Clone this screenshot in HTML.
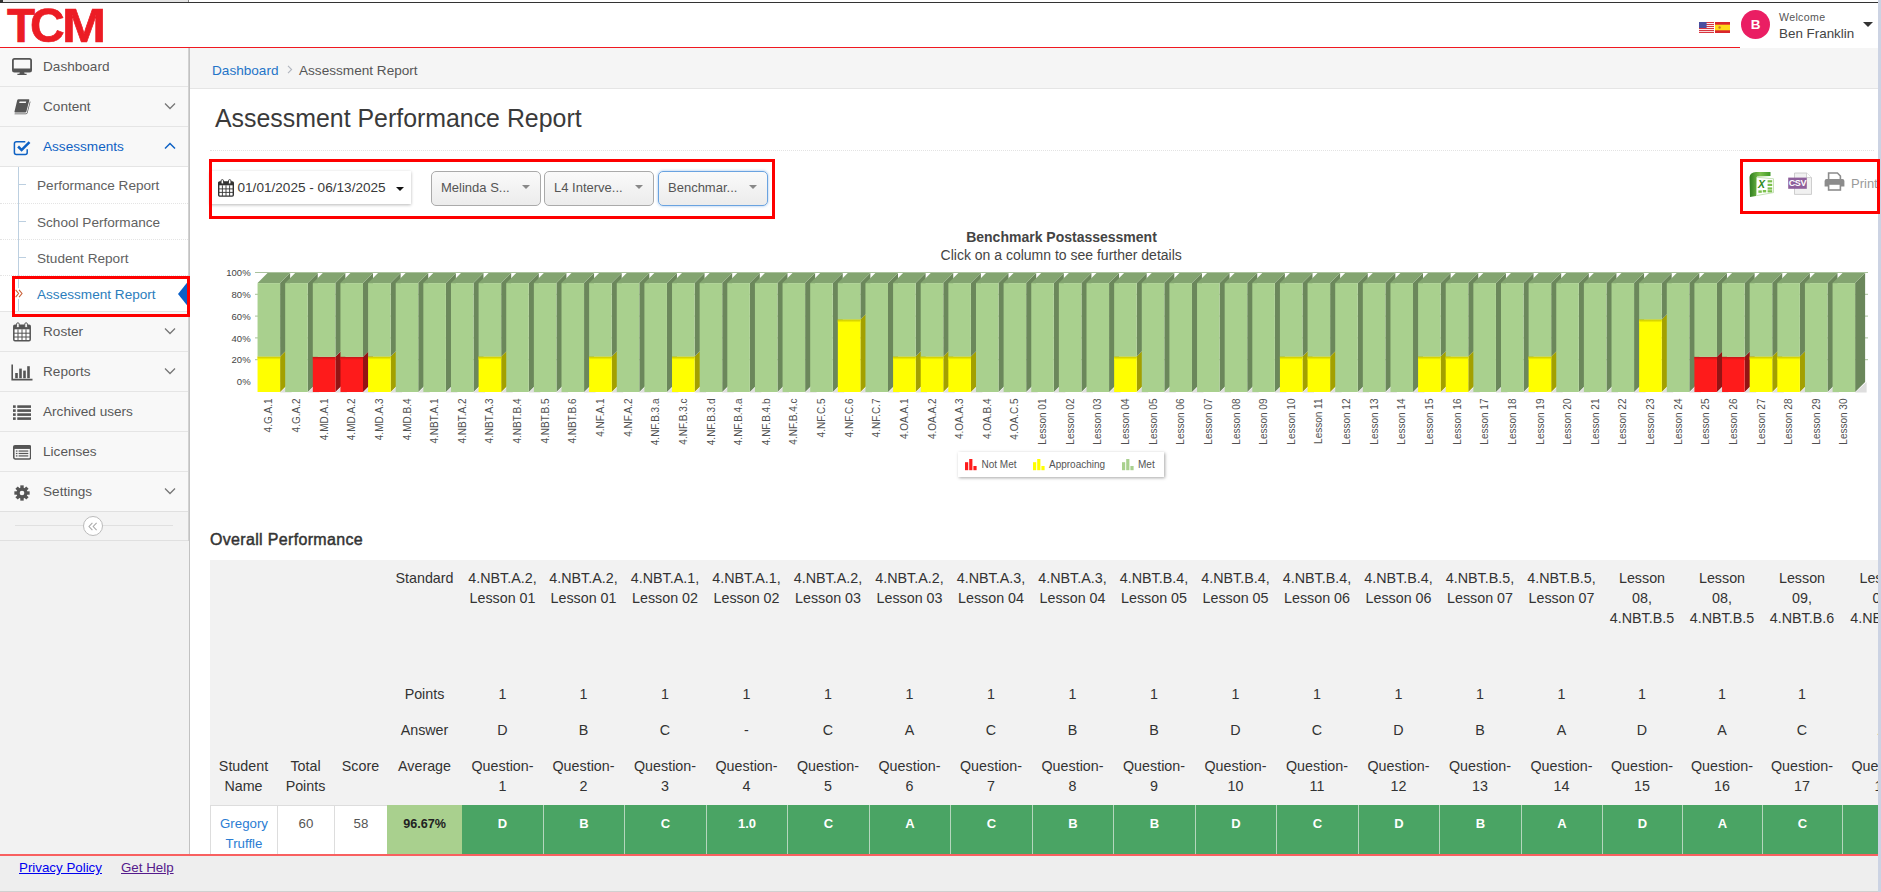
<!DOCTYPE html>
<html lang="en">
<head>
<meta charset="utf-8">
<title>Assessment Performance Report</title>
<style>
*{box-sizing:border-box;}
html,body{margin:0;padding:0;}
body{width:1881px;height:892px;overflow:hidden;position:relative;background:#fff;font-family:"Liberation Sans","DejaVu Sans",sans-serif;font-size:13.6px;color:#393939;}
a{text-decoration:none;}
.abs{position:absolute;}
/* top strip */
#topstrip{left:0;top:0;width:1878px;height:3px;background:#fff;border-bottom:1px solid #333;}
#rstrip{z-index:6;left:1878px;top:0;width:3px;height:892px;background:#ccd3e3;}
/* header */
#header{z-index:5;left:0;top:3px;width:1878px;height:45px;background:#fff;border-bottom:1px solid #f01820;}
#logo{left:0;top:0px;width:120px;height:45px;font-family:"Liberation Sans",sans-serif;font-weight:700;font-size:49.0px;line-height:45px;color:#ec1c24;-webkit-text-stroke:0.7px #ec1c24;}
#logo span{position:absolute;top:0;transform-origin:0 0;}
/* sidebar */
#sidebar{left:0;top:47px;width:190px;height:807px;background:#f2f2f2;border-right:1px solid #c2c2c2;}
.nav-item{position:absolute;left:0;width:188px;height:40px;background:#f8f8f8;border-bottom:1px solid #e5e5e5;color:#585858;}
.nav-item .txt{position:absolute;left:43px;top:0;line-height:39px;white-space:nowrap;}
.nav-item svg.ic{position:absolute;}
.nav-item svg.arr{position:absolute;left:164px;top:15px;}
.sub{position:absolute;left:0;width:188px;height:36px;background:#fff;border-top:1px dotted #e4e4e4;color:#616161;}
.sub .txt{position:absolute;left:37px;top:1px;line-height:36px;white-space:nowrap;}
.sub .tick{position:absolute;left:19px;top:17px;width:7px;height:1px;background:#bccfe0;}
/* breadcrumbs */
#crumbs{left:190px;top:47px;width:1688px;height:42px;background:#f5f5f5;border-bottom:1px solid #e5e5e5;}
#crumbs span{position:absolute;top:1px;line-height:46px;white-space:nowrap;}
/* footer */
#footer{left:0;top:854px;width:1878px;height:38px;background:#eee;border-top:2px solid #f86060;border-bottom:1px solid #d0d0d0;}
#footer a{position:absolute;top:4px;font-size:13.33px;line-height:16px;text-decoration:underline;white-space:nowrap;}

#title{left:25px;top:12px;font-size:24.9px;line-height:34px;color:#3a3a3a;white-space:nowrap;}
#dots{left:20px;top:61px;width:1664px;height:0;border-top:1px dotted #e3e3e3;}
.redbox{position:absolute;border:3px solid #fe0000;}
#date{left:20px;top:82px;width:201px;height:33px;background:#fff;box-shadow:0 1px 3px rgba(0,0,0,.28);}
#date .t{position:absolute;left:27.5px;top:0;line-height:33px;font-size:13.6px;color:#393939;white-space:nowrap;}
.sel{position:absolute;top:82px;width:110px;height:35px;border:1px solid #aaa;border-radius:5px;background:linear-gradient(#fafafa 0%,#f4f4f4 40%,#ececec 100%);}
.sel .t{position:absolute;left:9px;top:0;line-height:32px;font-size:13px;color:#555;white-space:nowrap;}
.sel svg{position:absolute;left:90px;top:13px;}
.th{position:absolute;text-align:center;font-size:14.3px;line-height:20px;color:#333;white-space:nowrap;}
.td{position:absolute;top:245px;height:60px;text-align:center;font-size:13.3px;line-height:20px;padding-top:8px;white-space:nowrap;}
.g{background:#4aa464;color:#fff;font-weight:700;font-size:13px;border-left:1px solid #b5d6bd;padding-top:9px;}
</style>
</head>
<body>
<div id="topstrip" class="abs"><div class="abs" style="left:0;top:0;width:3px;height:3px;background:#333;"></div><div class="abs" style="left:3px;top:0;width:186px;height:2px;background:#e4e4e4;"></div><div class="abs" style="left:188px;top:0;width:1px;height:2px;background:#888;"></div></div>
<div id="header" class="abs">
  <div id="logo" class="abs" aria-label="TCM"><span style="left:7px;transform:scaleX(.94)">T</span><span style="left:30px;transform:scaleX(.98)">C</span><span style="left:61.8px;transform:scaleX(1.08)">M</span></div>
  <div class="abs" style="left:1740px;top:0;width:138px;height:45px;background:#fff;"></div>
  <svg class="abs" style="left:1699px;top:19px" width="15" height="11" viewBox="0 0 15 11"><rect width="15" height="11" fill="#fff"/><g fill="#d8353f"><rect y="0" width="15" height="1.1"/><rect y="2" width="15" height="1.1"/><rect y="4" width="15" height="1.1"/><rect y="6" width="15" height="1.1"/><rect y="8" width="15" height="1.1"/><rect y="9.9" width="15" height="1.1"/></g><rect width="7.6" height="6" fill="#4a4fa0"/></svg>
  <svg class="abs" style="left:1715px;top:19px" width="15" height="11" viewBox="0 0 15 11"><rect width="15" height="11" fill="#ffd91a"/><rect width="15" height="2.7" fill="#d9262c"/><rect y="8.3" width="15" height="2.7" fill="#d9262c"/><circle cx="4.6" cy="5.5" r="1.2" fill="#c8772a"/></svg>
  <div class="abs" style="left:1741px;top:6.5px;width:29px;height:29px;border-radius:50%;background:#ea1e63;color:#fff;font-weight:700;font-size:13.5px;line-height:29px;text-align:center;">B</div>
  <div class="abs" style="left:1779px;top:8px;font-size:10.6px;letter-spacing:.35px;line-height:13px;color:#555;white-space:nowrap;">Welcome</div>
  <div class="abs" style="left:1779px;top:23px;font-size:13.4px;line-height:16px;color:#444;white-space:nowrap;">Ben Franklin</div>
  <svg class="abs" style="left:1862.5px;top:19px" width="10" height="5" viewBox="0 0 10 5"><path d="M0 0H10L5 5Z" fill="#333"/></svg>
</div>
<div id="sidebar" class="abs">
<div class="nav-item" style="top:0px;"><svg class="ic" style="left:12px;top:11px" width="20" height="18" viewBox="0 0 20 18"><rect x="0.9" y="0.9" width="18.2" height="12.8" rx="1.6" fill="none" stroke="#555" stroke-width="1.8"/><rect x="1" y="10.5" width="18" height="3.2" fill="#555"/><path d="M8 13.5h4l.6 2.2h2v1.2H5.4v-1.2h2z" fill="#555"/></svg><span class="txt">Dashboard</span></div>
<div class="nav-item" style="top:40px;"><svg class="ic" style="left:13px;top:12px" width="18" height="17" viewBox="0 0 18 17"><path d="M4.2 1.2 Q4.5 0.3 5.5 0.3 H15.6 Q16.6 0.3 16.3 1.3 L13.4 12.6 Q13.1 13.5 12.1 13.5 H2.2 Q1.2 13.5 1.5 12.5 Z" fill="#555"/><path d="M6.6 2.6h6.6l-.4 1.5H6.2z" fill="#f8f8f8"/><path d="M16.9 2.2 L14 13.4 Q13.7 14.6 12.4 14.6 H2 Q1.3 14.6 1.5 15.3 H12.6 Q14.2 15.3 14.6 13.8 L17.5 2.8z" fill="#555"/></svg><span class="txt">Content</span><svg class="arr" width="12" height="8" viewBox="0 0 12 8"><path d="M1 1.5 L6 6.5 L11 1.5" fill="none" stroke="#777" stroke-width="1.3"/></svg></div>
<div class="nav-item" style="top:80px;color:#0f62c4;"><svg class="ic" style="left:13px;top:13px" width="19" height="16" viewBox="0 0 19 16"><path d="M14.2 9.2 V12.6 Q14.2 14.6 12.2 14.6 H3.4 Q1.4 14.6 1.4 12.6 V3.8 Q1.4 1.8 3.4 1.8 H12.3" fill="none" stroke="#0f62c4" stroke-width="1.5"/><path d="M4.2 7.4 L6 5.6 L8.6 8.2 L15.6 1.2 L17.4 3 L8.6 11.8 Z" fill="#0f62c4"/></svg><span class="txt">Assessments</span><svg class="arr" width="12" height="8" viewBox="0 0 12 8"><path d="M1 6.5 L6 1.5 L11 6.5" fill="none" stroke="#0f62c4" stroke-width="1.5"/></svg></div>
<div class="abs" style="left:0;top:120px;width:188px;height:145px;background:#fff;border-bottom:1px solid #e5e5e5;"></div>
<div class="sub" style="top:120px;border-top:0;"><span class="tick"></span><span class="txt">Performance Report</span></div>
<div class="sub" style="top:156px;"><span class="tick"></span><span class="txt">School Performance</span></div>
<div class="sub" style="top:192px;"><span class="tick"></span><span class="txt">Student Report</span></div>
<div class="sub" style="top:228px;color:#2b7dbc;"><span class="tick"></span><span class="txt">Assessment Report</span></div>
<div class="abs" style="left:18px;top:120px;width:1px;height:144px;background:#bccfe0;"></div>
<div class="abs" style="left:14px;top:241px;width:14px;height:11px;background:#fff;"></div>
<svg class="abs" style="left:15px;top:242px" width="8" height="9" viewBox="0 0 8 9"><path d="M0.6 0.8 L3.6 4.5 L0.6 8.2 M4 0.8 L7 4.5 L4 8.2" fill="none" stroke="#c86139" stroke-width="1.1"/></svg>
<svg class="abs" style="left:177px;top:232px" width="13" height="30" viewBox="0 0 13 30"><path d="M13 0 L1 15 L13 30 Z" fill="#0a60c8"/></svg>
<div class="nav-item" style="top:265px;"><svg class="ic" style="left:13px;top:10px" width="18" height="20" viewBox="0 0 18 20"><rect x="0.8" y="3.3" width="16.4" height="15.4" rx="1.2" fill="#fff" stroke="#555" stroke-width="1.5"/><rect x="0.8" y="3.3" width="16.4" height="4" fill="#555"/><path d="M5 7.3V18.7M9 7.3V18.7M13 7.3V18.7M1 11.2H17M1 15H17" stroke="#555" stroke-width="1"/><rect x="3.6" y="0.8" width="2.6" height="5" rx="1.3" fill="#fff" stroke="#555" stroke-width="1"/><rect x="11.8" y="0.8" width="2.6" height="5" rx="1.3" fill="#fff" stroke="#555" stroke-width="1"/></svg><span class="txt">Roster</span><svg class="arr" width="12" height="8" viewBox="0 0 12 8"><path d="M1 1.5 L6 6.5 L11 1.5" fill="none" stroke="#777" stroke-width="1.3"/></svg></div>
<div class="nav-item" style="top:305px;"><svg class="ic" style="left:11px;top:12px" width="22" height="17" viewBox="0 0 22 17"><path d="M1.2 0.5V15.6H21.5" fill="none" stroke="#555" stroke-width="1.6"/><rect x="4.2" y="9" width="2.6" height="5.2" fill="#555"/><rect x="8.2" y="4.6" width="2.6" height="9.6" fill="#555"/><rect x="12.2" y="6.6" width="2.6" height="7.6" fill="#555"/><rect x="16.2" y="2.2" width="2.6" height="12" fill="#555"/></svg><span class="txt">Reports</span><svg class="arr" width="12" height="8" viewBox="0 0 12 8"><path d="M1 1.5 L6 6.5 L11 1.5" fill="none" stroke="#777" stroke-width="1.3"/></svg></div>
<div class="nav-item" style="top:345px;"><svg class="ic" style="left:13px;top:13px" width="18.4" height="15" viewBox="0 0 19 15" preserveAspectRatio="none"><g fill="#555"><rect x="0" y="0.3" width="2.8" height="2.6"/><rect x="4.4" y="0.3" width="14.4" height="2.6"/><rect x="0" y="4.3" width="2.8" height="2.6"/><rect x="4.4" y="4.3" width="14.4" height="2.6"/><rect x="0" y="8.3" width="2.8" height="2.6"/><rect x="4.4" y="8.3" width="14.4" height="2.6"/><rect x="0" y="12.3" width="2.8" height="2.6"/><rect x="4.4" y="12.3" width="14.4" height="2.6"/></g></svg><span class="txt">Archived users</span></div>
<div class="nav-item" style="top:385px;"><svg class="ic" style="left:12.6px;top:12.5px" width="18.4" height="15" viewBox="0 0 19 16" preserveAspectRatio="none"><rect x="0.8" y="0.8" width="17.4" height="14" rx="1.4" fill="#f8f8f8" stroke="#555" stroke-width="1.6"/><rect x="0.8" y="0.8" width="17.4" height="3.4" fill="#555"/><g fill="#555"><rect x="3" y="5.8" width="1.6" height="1.3"/><rect x="5.8" y="5.8" width="10" height="1.3"/><rect x="3" y="8.4" width="1.6" height="1.3"/><rect x="5.8" y="8.4" width="10" height="1.3"/><rect x="3" y="11" width="1.6" height="1.3"/><rect x="5.8" y="11" width="10" height="1.3"/></g></svg><span class="txt">Licenses</span></div>
<div class="nav-item" style="top:425px;"><svg class="ic" style="left:14px;top:13px" width="16" height="16" viewBox="-9 -9 18 18"><g fill="#555"><circle r="6.2"/><rect x="-1.9" y="-8.6" width="3.8" height="4" transform="rotate(0)"/><rect x="-1.9" y="-8.6" width="3.8" height="4" transform="rotate(45)"/><rect x="-1.9" y="-8.6" width="3.8" height="4" transform="rotate(90)"/><rect x="-1.9" y="-8.6" width="3.8" height="4" transform="rotate(135)"/><rect x="-1.9" y="-8.6" width="3.8" height="4" transform="rotate(180)"/><rect x="-1.9" y="-8.6" width="3.8" height="4" transform="rotate(225)"/><rect x="-1.9" y="-8.6" width="3.8" height="4" transform="rotate(270)"/><rect x="-1.9" y="-8.6" width="3.8" height="4" transform="rotate(315)"/></g><circle r="2.6" fill="#f8f8f8"/></svg><span class="txt">Settings</span><svg class="arr" width="12" height="8" viewBox="0 0 12 8"><path d="M1 1.5 L6 6.5 L11 1.5" fill="none" stroke="#777" stroke-width="1.3"/></svg></div>
<div class="abs" style="left:0;top:464px;width:188px;height:30px;background:#f3f3f3;border-top:1px solid #e0e0e0;border-bottom:1px solid #e0e0e0;"><div class="abs" style="left:15px;top:13px;width:158px;height:1px;background:#e0e0e0;"></div><div class="abs" style="left:83px;top:4px;width:20px;height:20px;border-radius:50%;background:#fff;border:1px solid #bbb;"></div><svg class="abs" style="left:88px;top:10px" width="10" height="9" viewBox="0 0 10 9"><path d="M4.4 0.8 L1 4.5 L4.4 8.2 M8.6 0.8 L5.2 4.5 L8.6 8.2" fill="none" stroke="#aaa" stroke-width="1.1"/></svg></div>
<div class="abs" style="left:188px;top:0;width:1px;height:494px;background:#d2d2d2;"></div>
<div class="abs" style="left:12px;top:229px;width:178px;height:41px;border:3px solid #fe0000;"></div>
</div>
<div id="crumbs" class="abs">
  <span style="left:22px;color:#2474c8;">Dashboard</span>
  <svg class="abs" style="left:97px;top:18px" width="6" height="9" viewBox="0 0 6 9"><path d="M1 0.8 L4.6 4.5 L1 8.2" fill="none" stroke="#b2b6bf" stroke-width="1.1"/></svg>
  <span style="left:109px;color:#555;">Assessment Report</span>
</div>
<div id="main" class="abs" style="left:190px;top:89px;width:1688px;height:765px;overflow:hidden;">
<div id="title" class="abs">Assessment Performance Report</div>
<div id="dots" class="abs"></div>
<div id="date" class="abs"><svg class="abs" style="left:8px;top:8px" width="16" height="18" viewBox="0 0 16 18"><rect x="0.7" y="2.9" width="14.6" height="14.2" rx="1.1" fill="#fff" stroke="#333" stroke-width="1.4"/><rect x="0.7" y="2.9" width="14.6" height="3.4" fill="#333"/><path d="M4.4 6.3V17M8 6.3V17M11.6 6.3V17M1 9.9H15M1 13.4H15" stroke="#333" stroke-width="0.9"/><rect x="3.1" y="0.6" width="2.4" height="4.4" rx="1.2" fill="#fff" stroke="#333" stroke-width="0.9"/><rect x="10.5" y="0.6" width="2.4" height="4.4" rx="1.2" fill="#fff" stroke="#333" stroke-width="0.9"/></svg><span class="t">01/01/2025 - 06/13/2025</span><svg class="abs" style="left:185.5px;top:16px" width="8" height="4" viewBox="0 0 8 4"><path d="M0 0H8L4 4Z" fill="#111"/></svg></div>
<div class="sel" style="left:241px;"><span class="t">Melinda S...</span><svg width="8" height="4" viewBox="0 0 8 4"><path d="M0 0H8L4 4Z" fill="#888"/></svg></div>
<div class="sel" style="left:354px;"><span class="t">L4 Interve...</span><svg width="8" height="4" viewBox="0 0 8 4"><path d="M0 0H8L4 4Z" fill="#888"/></svg></div>
<div class="sel" style="left:468px;border-color:#6aa3e0;box-shadow:0 0 3px rgba(90,150,220,.6);"><span class="t">Benchmar...</span><svg width="8" height="4" viewBox="0 0 8 4"><path d="M0 0H8L4 4Z" fill="#888"/></svg></div>
<div class="redbox" style="left:19px;top:70px;width:566px;height:60px;"></div>
<svg class="abs" style="left:1558px;top:82px" width="27" height="27" viewBox="0 0 27 27">
<defs><linearGradient id="xg" x1="0" y1="0" x2="1" y2="0"><stop offset="0" stop-color="#2e7d1e"/><stop offset="0.5" stop-color="#7cc04c"/><stop offset="1" stop-color="#3f9a26"/></linearGradient></defs>
<path d="M1.5 6 Q2 1.5 8 1 L22.5 1 L22.5 5 L9 5.5 L8 25 L2 26 Z" fill="url(#xg)"/>
<path d="M8.5 6.2 L25.5 7.8 L25.5 21.6 L8.5 24.6 Z" fill="#fff" stroke="#9fcf86" stroke-width="0.6"/>
<g fill="#7cc04c"><rect x="19.6" y="9.2" width="4.6" height="2.2"/><rect x="19.6" y="12.8" width="4.6" height="2.2"/><rect x="19.6" y="16.4" width="4.6" height="2.2"/><rect x="10.4" y="19.4" width="3.4" height="2.4"/><rect x="14.8" y="19" width="3.4" height="2.4"/><rect x="19.6" y="19.2" width="4.6" height="2.2"/></g>
<text x="10" y="17" font-family="Liberation Sans,sans-serif" font-weight="700" font-style="italic" font-size="10.5" fill="#2f8a1c">X</text>
</svg>
<svg class="abs" style="left:1597px;top:83px" width="27" height="24" viewBox="0 0 27 24">
<path d="M7.5 1 H19.5 L24.5 5.6 V22.4 H7.5 Z" fill="#f1f1f1" stroke="#c8c8c8" stroke-width="0.9"/><path d="M19.5 1 V5.6 H24.5" fill="#fff" stroke="#c8c8c8" stroke-width="0.8"/>
<rect x="1.2" y="5.6" width="18.6" height="11.2" fill="#8e5f9b"/>
<text x="10.4" y="14.4" text-anchor="middle" font-family="Liberation Sans,sans-serif" font-weight="700" font-size="9" letter-spacing="-0.4" fill="#fff">CSV</text>
</svg>
<svg class="abs" style="left:1634px;top:83px" width="21" height="19" viewBox="0 0 21 19">
<path d="M4.6 7.4 V1 H13.4 L16.4 4 V7.4" fill="#fff" stroke="#8c8c8c" stroke-width="1.6"/>
<path d="M2.6 7 H18.4 Q20.4 7 20.4 9 V14.4 H0.6 V9 Q0.6 7 2.6 7 Z" fill="#8c8c8c"/>
<rect x="4.6" y="12" width="11.8" height="6" fill="#fff" stroke="#8c8c8c" stroke-width="1.6"/>
</svg>
<div class="abs" style="left:1661px;top:87px;font-size:13px;line-height:16px;color:#9a9a9a;white-space:nowrap;">Print</div>
<svg class="abs" style="left:0;top:130px" width="1687" height="300" viewBox="0 0 1687 300" font-family="Liberation Sans,sans-serif">
<defs><linearGradient id="yg" x1="0" y1="0" x2="0" y2="1"><stop offset="0" stop-color="#c4c000"/><stop offset="1" stop-color="#ffff00"/></linearGradient><linearGradient id="rg" x1="0" y1="0" x2="0" y2="1"><stop offset="0" stop-color="#c01616"/><stop offset="1" stop-color="#fe1b1b"/></linearGradient></defs>
<text x="871.5" y="23" text-anchor="middle" font-size="14" font-weight="700" fill="#444">Benchmark Postassessment</text>
<text x="871.2" y="40.8" text-anchor="middle" font-size="14" fill="#444">Click on a column to see further details</text>
<text x="60.6" y="57.1" text-anchor="end" font-size="9.5" fill="#444">100%</text>
<path d="M65 53.5H1678" stroke="#a9c19c" stroke-width="1" fill="none"/>
<text x="60.6" y="78.9" text-anchor="end" font-size="9.5" fill="#444">80%</text>
<path d="M65 75.3H1678" stroke="#a9c19c" stroke-width="1" fill="none"/>
<text x="60.6" y="100.7" text-anchor="end" font-size="9.5" fill="#444">60%</text>
<path d="M65 97.1H1678" stroke="#a9c19c" stroke-width="1" fill="none"/>
<text x="60.6" y="122.5" text-anchor="end" font-size="9.5" fill="#444">40%</text>
<path d="M65 118.9H1678" stroke="#a9c19c" stroke-width="1" fill="none"/>
<text x="60.6" y="144.3" text-anchor="end" font-size="9.5" fill="#444">20%</text>
<path d="M65 140.7H1678" stroke="#a9c19c" stroke-width="1" fill="none"/>
<text x="60.6" y="166.1" text-anchor="end" font-size="9.5" fill="#444">0%</text>
<polygon points="90.1,173.4 101.6,163.0 101.6,173.4" fill="#dedede"/>
<polygon points="90.1,137.5 100.1,127.5 100.1,163.0 90.1,173.0" fill="#a3a000"/>
<rect x="67.55" y="137.5" width="22.55" height="35.5" fill="#ffff00"/>
<rect x="67.55" y="137.5" width="22.55" height="3.2" fill="url(#yg)"/>
<polygon points="90.1,64.1 100.1,54.1 100.1,127.5 90.1,137.5" fill="#6b875b"/>
<polygon points="67.55,64.1 90.1,64.1 100.1,54.1 77.55,54.1" fill="#83a470"/>
<rect x="67.55" y="64.1" width="22.55" height="73.4" fill="#a9d08e"/>
<polygon points="117.73,173.4 129.23,163.0 129.23,173.4" fill="#dedede"/>
<polygon points="117.73,64.1 127.73,54.1 127.73,163.0 117.73,173.0" fill="#6b875b"/>
<polygon points="95.18,64.1 117.73,64.1 127.73,54.1 105.18,54.1" fill="#83a470"/>
<rect x="95.18" y="64.1" width="22.55" height="108.9" fill="#a9d08e"/>
<polygon points="145.36,173.4 156.86,163.0 156.86,173.4" fill="#dedede"/>
<polygon points="145.36,137.83 155.36,127.83 155.36,163.0 145.36,173.0" fill="#941414"/>
<rect x="122.81" y="137.83" width="22.55" height="35.17" fill="#fe1b1b"/>
<rect x="122.81" y="137.83" width="22.55" height="3.2" fill="url(#rg)"/>
<polygon points="145.36,64.1 155.36,54.1 155.36,127.83 145.36,137.83" fill="#6b875b"/>
<polygon points="122.81,64.1 145.36,64.1 155.36,54.1 132.81,54.1" fill="#83a470"/>
<rect x="122.81" y="64.1" width="22.55" height="73.73" fill="#a9d08e"/>
<polygon points="173.0,173.4 184.5,163.0 184.5,173.4" fill="#dedede"/>
<polygon points="173.0,137.83 183.0,127.83 183.0,163.0 173.0,173.0" fill="#941414"/>
<rect x="150.45" y="137.83" width="22.55" height="35.17" fill="#fe1b1b"/>
<rect x="150.45" y="137.83" width="22.55" height="3.2" fill="url(#rg)"/>
<polygon points="173.0,64.1 183.0,54.1 183.0,127.83 173.0,137.83" fill="#6b875b"/>
<polygon points="150.45,64.1 173.0,64.1 183.0,54.1 160.45,54.1" fill="#83a470"/>
<rect x="150.45" y="64.1" width="22.55" height="73.73" fill="#a9d08e"/>
<polygon points="200.63,173.4 212.13,163.0 212.13,173.4" fill="#dedede"/>
<polygon points="200.63,137.5 210.63,127.5 210.63,163.0 200.63,173.0" fill="#a3a000"/>
<rect x="178.08" y="137.5" width="22.55" height="35.5" fill="#ffff00"/>
<rect x="178.08" y="137.5" width="22.55" height="3.2" fill="url(#yg)"/>
<polygon points="200.63,64.1 210.63,54.1 210.63,127.5 200.63,137.5" fill="#6b875b"/>
<polygon points="178.08,64.1 200.63,64.1 210.63,54.1 188.08,54.1" fill="#83a470"/>
<rect x="178.08" y="64.1" width="22.55" height="73.4" fill="#a9d08e"/>
<polygon points="228.26,173.4 239.76,163.0 239.76,173.4" fill="#dedede"/>
<polygon points="228.26,64.1 238.26,54.1 238.26,163.0 228.26,173.0" fill="#6b875b"/>
<polygon points="205.71,64.1 228.26,64.1 238.26,54.1 215.71,54.1" fill="#83a470"/>
<rect x="205.71" y="64.1" width="22.55" height="108.9" fill="#a9d08e"/>
<polygon points="255.89,173.4 267.39,163.0 267.39,173.4" fill="#dedede"/>
<polygon points="255.89,64.1 265.89,54.1 265.89,163.0 255.89,173.0" fill="#6b875b"/>
<polygon points="233.34,64.1 255.89,64.1 265.89,54.1 243.34,54.1" fill="#83a470"/>
<rect x="233.34" y="64.1" width="22.55" height="108.9" fill="#a9d08e"/>
<polygon points="283.52,173.4 295.02,163.0 295.02,173.4" fill="#dedede"/>
<polygon points="283.52,64.1 293.52,54.1 293.52,163.0 283.52,173.0" fill="#6b875b"/>
<polygon points="260.97,64.1 283.52,64.1 293.52,54.1 270.97,54.1" fill="#83a470"/>
<rect x="260.97" y="64.1" width="22.55" height="108.9" fill="#a9d08e"/>
<polygon points="311.16,173.4 322.66,163.0 322.66,173.4" fill="#dedede"/>
<polygon points="311.16,137.5 321.16,127.5 321.16,163.0 311.16,173.0" fill="#a3a000"/>
<rect x="288.61" y="137.5" width="22.55" height="35.5" fill="#ffff00"/>
<rect x="288.61" y="137.5" width="22.55" height="3.2" fill="url(#yg)"/>
<polygon points="311.16,64.1 321.16,54.1 321.16,127.5 311.16,137.5" fill="#6b875b"/>
<polygon points="288.61,64.1 311.16,64.1 321.16,54.1 298.61,54.1" fill="#83a470"/>
<rect x="288.61" y="64.1" width="22.55" height="73.4" fill="#a9d08e"/>
<polygon points="338.79,173.4 350.29,163.0 350.29,173.4" fill="#dedede"/>
<polygon points="338.79,64.1 348.79,54.1 348.79,163.0 338.79,173.0" fill="#6b875b"/>
<polygon points="316.24,64.1 338.79,64.1 348.79,54.1 326.24,54.1" fill="#83a470"/>
<rect x="316.24" y="64.1" width="22.55" height="108.9" fill="#a9d08e"/>
<polygon points="366.42,173.4 377.92,163.0 377.92,173.4" fill="#dedede"/>
<polygon points="366.42,64.1 376.42,54.1 376.42,163.0 366.42,173.0" fill="#6b875b"/>
<polygon points="343.87,64.1 366.42,64.1 376.42,54.1 353.87,54.1" fill="#83a470"/>
<rect x="343.87" y="64.1" width="22.55" height="108.9" fill="#a9d08e"/>
<polygon points="394.05,173.4 405.55,163.0 405.55,173.4" fill="#dedede"/>
<polygon points="394.05,64.1 404.05,54.1 404.05,163.0 394.05,173.0" fill="#6b875b"/>
<polygon points="371.5,64.1 394.05,64.1 404.05,54.1 381.5,54.1" fill="#83a470"/>
<rect x="371.5" y="64.1" width="22.55" height="108.9" fill="#a9d08e"/>
<polygon points="421.68,173.4 433.18,163.0 433.18,173.4" fill="#dedede"/>
<polygon points="421.68,137.5 431.68,127.5 431.68,163.0 421.68,173.0" fill="#a3a000"/>
<rect x="399.13" y="137.5" width="22.55" height="35.5" fill="#ffff00"/>
<rect x="399.13" y="137.5" width="22.55" height="3.2" fill="url(#yg)"/>
<polygon points="421.68,64.1 431.68,54.1 431.68,127.5 421.68,137.5" fill="#6b875b"/>
<polygon points="399.13,64.1 421.68,64.1 431.68,54.1 409.13,54.1" fill="#83a470"/>
<rect x="399.13" y="64.1" width="22.55" height="73.4" fill="#a9d08e"/>
<polygon points="449.32,173.4 460.82,163.0 460.82,173.4" fill="#dedede"/>
<polygon points="449.32,64.1 459.32,54.1 459.32,163.0 449.32,173.0" fill="#6b875b"/>
<polygon points="426.77,64.1 449.32,64.1 459.32,54.1 436.77,54.1" fill="#83a470"/>
<rect x="426.77" y="64.1" width="22.55" height="108.9" fill="#a9d08e"/>
<polygon points="476.95,173.4 488.45,163.0 488.45,173.4" fill="#dedede"/>
<polygon points="476.95,64.1 486.95,54.1 486.95,163.0 476.95,173.0" fill="#6b875b"/>
<polygon points="454.4,64.1 476.95,64.1 486.95,54.1 464.4,54.1" fill="#83a470"/>
<rect x="454.4" y="64.1" width="22.55" height="108.9" fill="#a9d08e"/>
<polygon points="504.58,173.4 516.08,163.0 516.08,173.4" fill="#dedede"/>
<polygon points="504.58,137.5 514.58,127.5 514.58,163.0 504.58,173.0" fill="#a3a000"/>
<rect x="482.03" y="137.5" width="22.55" height="35.5" fill="#ffff00"/>
<rect x="482.03" y="137.5" width="22.55" height="3.2" fill="url(#yg)"/>
<polygon points="504.58,64.1 514.58,54.1 514.58,127.5 504.58,137.5" fill="#6b875b"/>
<polygon points="482.03,64.1 504.58,64.1 514.58,54.1 492.03,54.1" fill="#83a470"/>
<rect x="482.03" y="64.1" width="22.55" height="73.4" fill="#a9d08e"/>
<polygon points="532.21,173.4 543.71,163.0 543.71,173.4" fill="#dedede"/>
<polygon points="532.21,64.1 542.21,54.1 542.21,163.0 532.21,173.0" fill="#6b875b"/>
<polygon points="509.66,64.1 532.21,64.1 542.21,54.1 519.66,54.1" fill="#83a470"/>
<rect x="509.66" y="64.1" width="22.55" height="108.9" fill="#a9d08e"/>
<polygon points="559.84,173.4 571.34,163.0 571.34,173.4" fill="#dedede"/>
<polygon points="559.84,64.1 569.84,54.1 569.84,163.0 559.84,173.0" fill="#6b875b"/>
<polygon points="537.29,64.1 559.84,64.1 569.84,54.1 547.29,54.1" fill="#83a470"/>
<rect x="537.29" y="64.1" width="22.55" height="108.9" fill="#a9d08e"/>
<polygon points="587.48,173.4 598.98,163.0 598.98,173.4" fill="#dedede"/>
<polygon points="587.48,64.1 597.48,54.1 597.48,163.0 587.48,173.0" fill="#6b875b"/>
<polygon points="564.93,64.1 587.48,64.1 597.48,54.1 574.93,54.1" fill="#83a470"/>
<rect x="564.93" y="64.1" width="22.55" height="108.9" fill="#a9d08e"/>
<polygon points="615.11,173.4 626.61,163.0 626.61,173.4" fill="#dedede"/>
<polygon points="615.11,64.1 625.11,54.1 625.11,163.0 615.11,173.0" fill="#6b875b"/>
<polygon points="592.56,64.1 615.11,64.1 625.11,54.1 602.56,54.1" fill="#83a470"/>
<rect x="592.56" y="64.1" width="22.55" height="108.9" fill="#a9d08e"/>
<polygon points="642.74,173.4 654.24,163.0 654.24,173.4" fill="#dedede"/>
<polygon points="642.74,64.1 652.74,54.1 652.74,163.0 642.74,173.0" fill="#6b875b"/>
<polygon points="620.19,64.1 642.74,64.1 652.74,54.1 630.19,54.1" fill="#83a470"/>
<rect x="620.19" y="64.1" width="22.55" height="108.9" fill="#a9d08e"/>
<polygon points="670.37,173.4 681.87,163.0 681.87,173.4" fill="#dedede"/>
<polygon points="670.37,100.4 680.37,90.4 680.37,163.0 670.37,173.0" fill="#a3a000"/>
<rect x="647.82" y="100.4" width="22.55" height="72.6" fill="#ffff00"/>
<rect x="647.82" y="100.4" width="22.55" height="3.2" fill="url(#yg)"/>
<polygon points="670.37,64.1 680.37,54.1 680.37,90.4 670.37,100.4" fill="#6b875b"/>
<polygon points="647.82,64.1 670.37,64.1 680.37,54.1 657.82,54.1" fill="#83a470"/>
<rect x="647.82" y="64.1" width="22.55" height="36.3" fill="#a9d08e"/>
<polygon points="698.0,173.4 709.5,163.0 709.5,173.4" fill="#dedede"/>
<polygon points="698.0,64.1 708.0,54.1 708.0,163.0 698.0,173.0" fill="#6b875b"/>
<polygon points="675.45,64.1 698.0,64.1 708.0,54.1 685.45,54.1" fill="#83a470"/>
<rect x="675.45" y="64.1" width="22.55" height="108.9" fill="#a9d08e"/>
<polygon points="725.64,173.4 737.14,163.0 737.14,173.4" fill="#dedede"/>
<polygon points="725.64,137.5 735.64,127.5 735.64,163.0 725.64,173.0" fill="#a3a000"/>
<rect x="703.09" y="137.5" width="22.55" height="35.5" fill="#ffff00"/>
<rect x="703.09" y="137.5" width="22.55" height="3.2" fill="url(#yg)"/>
<polygon points="725.64,64.1 735.64,54.1 735.64,127.5 725.64,137.5" fill="#6b875b"/>
<polygon points="703.09,64.1 725.64,64.1 735.64,54.1 713.09,54.1" fill="#83a470"/>
<rect x="703.09" y="64.1" width="22.55" height="73.4" fill="#a9d08e"/>
<polygon points="753.27,173.4 764.77,163.0 764.77,173.4" fill="#dedede"/>
<polygon points="753.27,137.5 763.27,127.5 763.27,163.0 753.27,173.0" fill="#a3a000"/>
<rect x="730.72" y="137.5" width="22.55" height="35.5" fill="#ffff00"/>
<rect x="730.72" y="137.5" width="22.55" height="3.2" fill="url(#yg)"/>
<polygon points="753.27,64.1 763.27,54.1 763.27,127.5 753.27,137.5" fill="#6b875b"/>
<polygon points="730.72,64.1 753.27,64.1 763.27,54.1 740.72,54.1" fill="#83a470"/>
<rect x="730.72" y="64.1" width="22.55" height="73.4" fill="#a9d08e"/>
<polygon points="780.9,173.4 792.4,163.0 792.4,173.4" fill="#dedede"/>
<polygon points="780.9,137.5 790.9,127.5 790.9,163.0 780.9,173.0" fill="#a3a000"/>
<rect x="758.35" y="137.5" width="22.55" height="35.5" fill="#ffff00"/>
<rect x="758.35" y="137.5" width="22.55" height="3.2" fill="url(#yg)"/>
<polygon points="780.9,64.1 790.9,54.1 790.9,127.5 780.9,137.5" fill="#6b875b"/>
<polygon points="758.35,64.1 780.9,64.1 790.9,54.1 768.35,54.1" fill="#83a470"/>
<rect x="758.35" y="64.1" width="22.55" height="73.4" fill="#a9d08e"/>
<polygon points="808.53,173.4 820.03,163.0 820.03,173.4" fill="#dedede"/>
<polygon points="808.53,64.1 818.53,54.1 818.53,163.0 808.53,173.0" fill="#6b875b"/>
<polygon points="785.98,64.1 808.53,64.1 818.53,54.1 795.98,54.1" fill="#83a470"/>
<rect x="785.98" y="64.1" width="22.55" height="108.9" fill="#a9d08e"/>
<polygon points="836.16,173.4 847.66,163.0 847.66,173.4" fill="#dedede"/>
<polygon points="836.16,64.1 846.16,54.1 846.16,163.0 836.16,173.0" fill="#6b875b"/>
<polygon points="813.61,64.1 836.16,64.1 846.16,54.1 823.61,54.1" fill="#83a470"/>
<rect x="813.61" y="64.1" width="22.55" height="108.9" fill="#a9d08e"/>
<polygon points="863.8,173.4 875.3,163.0 875.3,173.4" fill="#dedede"/>
<polygon points="863.8,64.1 873.8,54.1 873.8,163.0 863.8,173.0" fill="#6b875b"/>
<polygon points="841.25,64.1 863.8,64.1 873.8,54.1 851.25,54.1" fill="#83a470"/>
<rect x="841.25" y="64.1" width="22.55" height="108.9" fill="#a9d08e"/>
<polygon points="891.43,173.4 902.93,163.0 902.93,173.4" fill="#dedede"/>
<polygon points="891.43,64.1 901.43,54.1 901.43,163.0 891.43,173.0" fill="#6b875b"/>
<polygon points="868.88,64.1 891.43,64.1 901.43,54.1 878.88,54.1" fill="#83a470"/>
<rect x="868.88" y="64.1" width="22.55" height="108.9" fill="#a9d08e"/>
<polygon points="919.06,173.4 930.56,163.0 930.56,173.4" fill="#dedede"/>
<polygon points="919.06,64.1 929.06,54.1 929.06,163.0 919.06,173.0" fill="#6b875b"/>
<polygon points="896.51,64.1 919.06,64.1 929.06,54.1 906.51,54.1" fill="#83a470"/>
<rect x="896.51" y="64.1" width="22.55" height="108.9" fill="#a9d08e"/>
<polygon points="946.69,173.4 958.19,163.0 958.19,173.4" fill="#dedede"/>
<polygon points="946.69,137.5 956.69,127.5 956.69,163.0 946.69,173.0" fill="#a3a000"/>
<rect x="924.14" y="137.5" width="22.55" height="35.5" fill="#ffff00"/>
<rect x="924.14" y="137.5" width="22.55" height="3.2" fill="url(#yg)"/>
<polygon points="946.69,64.1 956.69,54.1 956.69,127.5 946.69,137.5" fill="#6b875b"/>
<polygon points="924.14,64.1 946.69,64.1 956.69,54.1 934.14,54.1" fill="#83a470"/>
<rect x="924.14" y="64.1" width="22.55" height="73.4" fill="#a9d08e"/>
<polygon points="974.32,173.4 985.82,163.0 985.82,173.4" fill="#dedede"/>
<polygon points="974.32,64.1 984.32,54.1 984.32,163.0 974.32,173.0" fill="#6b875b"/>
<polygon points="951.77,64.1 974.32,64.1 984.32,54.1 961.77,54.1" fill="#83a470"/>
<rect x="951.77" y="64.1" width="22.55" height="108.9" fill="#a9d08e"/>
<polygon points="1001.96,173.4 1013.46,163.0 1013.46,173.4" fill="#dedede"/>
<polygon points="1001.96,64.1 1011.96,54.1 1011.96,163.0 1001.96,173.0" fill="#6b875b"/>
<polygon points="979.41,64.1 1001.96,64.1 1011.96,54.1 989.41,54.1" fill="#83a470"/>
<rect x="979.41" y="64.1" width="22.55" height="108.9" fill="#a9d08e"/>
<polygon points="1029.59,173.4 1041.09,163.0 1041.09,173.4" fill="#dedede"/>
<polygon points="1029.59,64.1 1039.59,54.1 1039.59,163.0 1029.59,173.0" fill="#6b875b"/>
<polygon points="1007.04,64.1 1029.59,64.1 1039.59,54.1 1017.04,54.1" fill="#83a470"/>
<rect x="1007.04" y="64.1" width="22.55" height="108.9" fill="#a9d08e"/>
<polygon points="1057.22,173.4 1068.72,163.0 1068.72,173.4" fill="#dedede"/>
<polygon points="1057.22,64.1 1067.22,54.1 1067.22,163.0 1057.22,173.0" fill="#6b875b"/>
<polygon points="1034.67,64.1 1057.22,64.1 1067.22,54.1 1044.67,54.1" fill="#83a470"/>
<rect x="1034.67" y="64.1" width="22.55" height="108.9" fill="#a9d08e"/>
<polygon points="1084.85,173.4 1096.35,163.0 1096.35,173.4" fill="#dedede"/>
<polygon points="1084.85,64.1 1094.85,54.1 1094.85,163.0 1084.85,173.0" fill="#6b875b"/>
<polygon points="1062.3,64.1 1084.85,64.1 1094.85,54.1 1072.3,54.1" fill="#83a470"/>
<rect x="1062.3" y="64.1" width="22.55" height="108.9" fill="#a9d08e"/>
<polygon points="1112.48,173.4 1123.98,163.0 1123.98,173.4" fill="#dedede"/>
<polygon points="1112.48,137.5 1122.48,127.5 1122.48,163.0 1112.48,173.0" fill="#a3a000"/>
<rect x="1089.93" y="137.5" width="22.55" height="35.5" fill="#ffff00"/>
<rect x="1089.93" y="137.5" width="22.55" height="3.2" fill="url(#yg)"/>
<polygon points="1112.48,64.1 1122.48,54.1 1122.48,127.5 1112.48,137.5" fill="#6b875b"/>
<polygon points="1089.93,64.1 1112.48,64.1 1122.48,54.1 1099.93,54.1" fill="#83a470"/>
<rect x="1089.93" y="64.1" width="22.55" height="73.4" fill="#a9d08e"/>
<polygon points="1140.12,173.4 1151.62,163.0 1151.62,173.4" fill="#dedede"/>
<polygon points="1140.12,137.5 1150.12,127.5 1150.12,163.0 1140.12,173.0" fill="#a3a000"/>
<rect x="1117.57" y="137.5" width="22.55" height="35.5" fill="#ffff00"/>
<rect x="1117.57" y="137.5" width="22.55" height="3.2" fill="url(#yg)"/>
<polygon points="1140.12,64.1 1150.12,54.1 1150.12,127.5 1140.12,137.5" fill="#6b875b"/>
<polygon points="1117.57,64.1 1140.12,64.1 1150.12,54.1 1127.57,54.1" fill="#83a470"/>
<rect x="1117.57" y="64.1" width="22.55" height="73.4" fill="#a9d08e"/>
<polygon points="1167.75,173.4 1179.25,163.0 1179.25,173.4" fill="#dedede"/>
<polygon points="1167.75,64.1 1177.75,54.1 1177.75,163.0 1167.75,173.0" fill="#6b875b"/>
<polygon points="1145.2,64.1 1167.75,64.1 1177.75,54.1 1155.2,54.1" fill="#83a470"/>
<rect x="1145.2" y="64.1" width="22.55" height="108.9" fill="#a9d08e"/>
<polygon points="1195.38,173.4 1206.88,163.0 1206.88,173.4" fill="#dedede"/>
<polygon points="1195.38,64.1 1205.38,54.1 1205.38,163.0 1195.38,173.0" fill="#6b875b"/>
<polygon points="1172.83,64.1 1195.38,64.1 1205.38,54.1 1182.83,54.1" fill="#83a470"/>
<rect x="1172.83" y="64.1" width="22.55" height="108.9" fill="#a9d08e"/>
<polygon points="1223.01,173.4 1234.51,163.0 1234.51,173.4" fill="#dedede"/>
<polygon points="1223.01,64.1 1233.01,54.1 1233.01,163.0 1223.01,173.0" fill="#6b875b"/>
<polygon points="1200.46,64.1 1223.01,64.1 1233.01,54.1 1210.46,54.1" fill="#83a470"/>
<rect x="1200.46" y="64.1" width="22.55" height="108.9" fill="#a9d08e"/>
<polygon points="1250.64,173.4 1262.14,163.0 1262.14,173.4" fill="#dedede"/>
<polygon points="1250.64,137.5 1260.64,127.5 1260.64,163.0 1250.64,173.0" fill="#a3a000"/>
<rect x="1228.09" y="137.5" width="22.55" height="35.5" fill="#ffff00"/>
<rect x="1228.09" y="137.5" width="22.55" height="3.2" fill="url(#yg)"/>
<polygon points="1250.64,64.1 1260.64,54.1 1260.64,127.5 1250.64,137.5" fill="#6b875b"/>
<polygon points="1228.09,64.1 1250.64,64.1 1260.64,54.1 1238.09,54.1" fill="#83a470"/>
<rect x="1228.09" y="64.1" width="22.55" height="73.4" fill="#a9d08e"/>
<polygon points="1278.28,173.4 1289.78,163.0 1289.78,173.4" fill="#dedede"/>
<polygon points="1278.28,137.5 1288.28,127.5 1288.28,163.0 1278.28,173.0" fill="#a3a000"/>
<rect x="1255.73" y="137.5" width="22.55" height="35.5" fill="#ffff00"/>
<rect x="1255.73" y="137.5" width="22.55" height="3.2" fill="url(#yg)"/>
<polygon points="1278.28,64.1 1288.28,54.1 1288.28,127.5 1278.28,137.5" fill="#6b875b"/>
<polygon points="1255.73,64.1 1278.28,64.1 1288.28,54.1 1265.73,54.1" fill="#83a470"/>
<rect x="1255.73" y="64.1" width="22.55" height="73.4" fill="#a9d08e"/>
<polygon points="1305.91,173.4 1317.41,163.0 1317.41,173.4" fill="#dedede"/>
<polygon points="1305.91,64.1 1315.91,54.1 1315.91,163.0 1305.91,173.0" fill="#6b875b"/>
<polygon points="1283.36,64.1 1305.91,64.1 1315.91,54.1 1293.36,54.1" fill="#83a470"/>
<rect x="1283.36" y="64.1" width="22.55" height="108.9" fill="#a9d08e"/>
<polygon points="1333.54,173.4 1345.04,163.0 1345.04,173.4" fill="#dedede"/>
<polygon points="1333.54,64.1 1343.54,54.1 1343.54,163.0 1333.54,173.0" fill="#6b875b"/>
<polygon points="1310.99,64.1 1333.54,64.1 1343.54,54.1 1320.99,54.1" fill="#83a470"/>
<rect x="1310.99" y="64.1" width="22.55" height="108.9" fill="#a9d08e"/>
<polygon points="1361.17,173.4 1372.67,163.0 1372.67,173.4" fill="#dedede"/>
<polygon points="1361.17,137.5 1371.17,127.5 1371.17,163.0 1361.17,173.0" fill="#a3a000"/>
<rect x="1338.62" y="137.5" width="22.55" height="35.5" fill="#ffff00"/>
<rect x="1338.62" y="137.5" width="22.55" height="3.2" fill="url(#yg)"/>
<polygon points="1361.17,64.1 1371.17,54.1 1371.17,127.5 1361.17,137.5" fill="#6b875b"/>
<polygon points="1338.62,64.1 1361.17,64.1 1371.17,54.1 1348.62,54.1" fill="#83a470"/>
<rect x="1338.62" y="64.1" width="22.55" height="73.4" fill="#a9d08e"/>
<polygon points="1388.8,173.4 1400.3,163.0 1400.3,173.4" fill="#dedede"/>
<polygon points="1388.8,64.1 1398.8,54.1 1398.8,163.0 1388.8,173.0" fill="#6b875b"/>
<polygon points="1366.25,64.1 1388.8,64.1 1398.8,54.1 1376.25,54.1" fill="#83a470"/>
<rect x="1366.25" y="64.1" width="22.55" height="108.9" fill="#a9d08e"/>
<polygon points="1416.44,173.4 1427.94,163.0 1427.94,173.4" fill="#dedede"/>
<polygon points="1416.44,64.1 1426.44,54.1 1426.44,163.0 1416.44,173.0" fill="#6b875b"/>
<polygon points="1393.89,64.1 1416.44,64.1 1426.44,54.1 1403.89,54.1" fill="#83a470"/>
<rect x="1393.89" y="64.1" width="22.55" height="108.9" fill="#a9d08e"/>
<polygon points="1444.07,173.4 1455.57,163.0 1455.57,173.4" fill="#dedede"/>
<polygon points="1444.07,64.1 1454.07,54.1 1454.07,163.0 1444.07,173.0" fill="#6b875b"/>
<polygon points="1421.52,64.1 1444.07,64.1 1454.07,54.1 1431.52,54.1" fill="#83a470"/>
<rect x="1421.52" y="64.1" width="22.55" height="108.9" fill="#a9d08e"/>
<polygon points="1471.7,173.4 1483.2,163.0 1483.2,173.4" fill="#dedede"/>
<polygon points="1471.7,100.4 1481.7,90.4 1481.7,163.0 1471.7,173.0" fill="#a3a000"/>
<rect x="1449.15" y="100.4" width="22.55" height="72.6" fill="#ffff00"/>
<rect x="1449.15" y="100.4" width="22.55" height="3.2" fill="url(#yg)"/>
<polygon points="1471.7,64.1 1481.7,54.1 1481.7,90.4 1471.7,100.4" fill="#6b875b"/>
<polygon points="1449.15,64.1 1471.7,64.1 1481.7,54.1 1459.15,54.1" fill="#83a470"/>
<rect x="1449.15" y="64.1" width="22.55" height="36.3" fill="#a9d08e"/>
<polygon points="1499.33,173.4 1510.83,163.0 1510.83,173.4" fill="#dedede"/>
<polygon points="1499.33,64.1 1509.33,54.1 1509.33,163.0 1499.33,173.0" fill="#6b875b"/>
<polygon points="1476.78,64.1 1499.33,64.1 1509.33,54.1 1486.78,54.1" fill="#83a470"/>
<rect x="1476.78" y="64.1" width="22.55" height="108.9" fill="#a9d08e"/>
<polygon points="1526.96,173.4 1538.46,163.0 1538.46,173.4" fill="#dedede"/>
<polygon points="1526.96,137.83 1536.96,127.83 1536.96,163.0 1526.96,173.0" fill="#941414"/>
<rect x="1504.41" y="137.83" width="22.55" height="35.17" fill="#fe1b1b"/>
<rect x="1504.41" y="137.83" width="22.55" height="3.2" fill="url(#rg)"/>
<polygon points="1526.96,64.1 1536.96,54.1 1536.96,127.83 1526.96,137.83" fill="#6b875b"/>
<polygon points="1504.41,64.1 1526.96,64.1 1536.96,54.1 1514.41,54.1" fill="#83a470"/>
<rect x="1504.41" y="64.1" width="22.55" height="73.73" fill="#a9d08e"/>
<polygon points="1554.6,173.4 1566.1,163.0 1566.1,173.4" fill="#dedede"/>
<polygon points="1554.6,137.83 1564.6,127.83 1564.6,163.0 1554.6,173.0" fill="#941414"/>
<rect x="1532.05" y="137.83" width="22.55" height="35.17" fill="#fe1b1b"/>
<rect x="1532.05" y="137.83" width="22.55" height="3.2" fill="url(#rg)"/>
<polygon points="1554.6,64.1 1564.6,54.1 1564.6,127.83 1554.6,137.83" fill="#6b875b"/>
<polygon points="1532.05,64.1 1554.6,64.1 1564.6,54.1 1542.05,54.1" fill="#83a470"/>
<rect x="1532.05" y="64.1" width="22.55" height="73.73" fill="#a9d08e"/>
<polygon points="1582.23,173.4 1593.73,163.0 1593.73,173.4" fill="#dedede"/>
<polygon points="1582.23,137.5 1592.23,127.5 1592.23,163.0 1582.23,173.0" fill="#a3a000"/>
<rect x="1559.68" y="137.5" width="22.55" height="35.5" fill="#ffff00"/>
<rect x="1559.68" y="137.5" width="22.55" height="3.2" fill="url(#yg)"/>
<polygon points="1582.23,64.1 1592.23,54.1 1592.23,127.5 1582.23,137.5" fill="#6b875b"/>
<polygon points="1559.68,64.1 1582.23,64.1 1592.23,54.1 1569.68,54.1" fill="#83a470"/>
<rect x="1559.68" y="64.1" width="22.55" height="73.4" fill="#a9d08e"/>
<polygon points="1609.86,173.4 1621.36,163.0 1621.36,173.4" fill="#dedede"/>
<polygon points="1609.86,137.5 1619.86,127.5 1619.86,163.0 1609.86,173.0" fill="#a3a000"/>
<rect x="1587.31" y="137.5" width="22.55" height="35.5" fill="#ffff00"/>
<rect x="1587.31" y="137.5" width="22.55" height="3.2" fill="url(#yg)"/>
<polygon points="1609.86,64.1 1619.86,54.1 1619.86,127.5 1609.86,137.5" fill="#6b875b"/>
<polygon points="1587.31,64.1 1609.86,64.1 1619.86,54.1 1597.31,54.1" fill="#83a470"/>
<rect x="1587.31" y="64.1" width="22.55" height="73.4" fill="#a9d08e"/>
<polygon points="1637.49,173.4 1648.99,163.0 1648.99,173.4" fill="#dedede"/>
<polygon points="1637.49,64.1 1647.49,54.1 1647.49,163.0 1637.49,173.0" fill="#6b875b"/>
<polygon points="1614.94,64.1 1637.49,64.1 1647.49,54.1 1624.94,54.1" fill="#83a470"/>
<rect x="1614.94" y="64.1" width="22.55" height="108.9" fill="#a9d08e"/>
<polygon points="1665.12,173.4 1676.62,163.0 1676.62,173.4" fill="#dedede"/>
<polygon points="1665.12,64.1 1675.12,54.1 1675.12,163.0 1665.12,173.0" fill="#6b875b"/>
<polygon points="1642.57,64.1 1665.12,64.1 1675.12,54.1 1652.57,54.1" fill="#83a470"/>
<rect x="1642.57" y="64.1" width="22.55" height="108.9" fill="#a9d08e"/>
<text transform="translate(82.43,179.5) rotate(-90)" text-anchor="end" font-size="10" fill="#505050">4.G.A.1</text>
<text transform="translate(110.06,179.5) rotate(-90)" text-anchor="end" font-size="10" fill="#505050">4.G.A.2</text>
<text transform="translate(137.69,179.5) rotate(-90)" text-anchor="end" font-size="10" fill="#505050">4.MD.A.1</text>
<text transform="translate(165.32,179.5) rotate(-90)" text-anchor="end" font-size="10" fill="#505050">4.MD.A.2</text>
<text transform="translate(192.95,179.5) rotate(-90)" text-anchor="end" font-size="10" fill="#505050">4.MD.A.3</text>
<text transform="translate(220.59,179.5) rotate(-90)" text-anchor="end" font-size="10" fill="#505050">4.MD.B.4</text>
<text transform="translate(248.22,179.5) rotate(-90)" text-anchor="end" font-size="10" fill="#505050">4.NBT.A.1</text>
<text transform="translate(275.85,179.5) rotate(-90)" text-anchor="end" font-size="10" fill="#505050">4.NBT.A.2</text>
<text transform="translate(303.48,179.5) rotate(-90)" text-anchor="end" font-size="10" fill="#505050">4.NBT.A.3</text>
<text transform="translate(331.11,179.5) rotate(-90)" text-anchor="end" font-size="10" fill="#505050">4.NBT.B.4</text>
<text transform="translate(358.75,179.5) rotate(-90)" text-anchor="end" font-size="10" fill="#505050">4.NBT.B.5</text>
<text transform="translate(386.38,179.5) rotate(-90)" text-anchor="end" font-size="10" fill="#505050">4.NBT.B.6</text>
<text transform="translate(414.01,179.5) rotate(-90)" text-anchor="end" font-size="10" fill="#505050">4.NF.A.1</text>
<text transform="translate(441.64,179.5) rotate(-90)" text-anchor="end" font-size="10" fill="#505050">4.NF.A.2</text>
<text transform="translate(469.27,179.5) rotate(-90)" text-anchor="end" font-size="10" fill="#505050">4.NF.B.3.a</text>
<text transform="translate(496.9,179.5) rotate(-90)" text-anchor="end" font-size="10" fill="#505050">4.NF.B.3.c</text>
<text transform="translate(524.54,179.5) rotate(-90)" text-anchor="end" font-size="10" fill="#505050">4.NF.B.3.d</text>
<text transform="translate(552.17,179.5) rotate(-90)" text-anchor="end" font-size="10" fill="#505050">4.NF.B.4.a</text>
<text transform="translate(579.8,179.5) rotate(-90)" text-anchor="end" font-size="10" fill="#505050">4.NF.B.4.b</text>
<text transform="translate(607.43,179.5) rotate(-90)" text-anchor="end" font-size="10" fill="#505050">4.NF.B.4.c</text>
<text transform="translate(635.07,179.5) rotate(-90)" text-anchor="end" font-size="10" fill="#505050">4.NF.C.5</text>
<text transform="translate(662.7,179.5) rotate(-90)" text-anchor="end" font-size="10" fill="#505050">4.NF.C.6</text>
<text transform="translate(690.33,179.5) rotate(-90)" text-anchor="end" font-size="10" fill="#505050">4.NF.C.7</text>
<text transform="translate(717.96,179.5) rotate(-90)" text-anchor="end" font-size="10" fill="#505050">4.OA.A.1</text>
<text transform="translate(745.59,179.5) rotate(-90)" text-anchor="end" font-size="10" fill="#505050">4.OA.A.2</text>
<text transform="translate(773.23,179.5) rotate(-90)" text-anchor="end" font-size="10" fill="#505050">4.OA.A.3</text>
<text transform="translate(800.86,179.5) rotate(-90)" text-anchor="end" font-size="10" fill="#505050">4.OA.B.4</text>
<text transform="translate(828.49,179.5) rotate(-90)" text-anchor="end" font-size="10" fill="#505050">4.OA.C.5</text>
<text transform="translate(856.12,179.5) rotate(-90)" text-anchor="end" font-size="10" fill="#505050">Lesson 01</text>
<text transform="translate(883.75,179.5) rotate(-90)" text-anchor="end" font-size="10" fill="#505050">Lesson 02</text>
<text transform="translate(911.38,179.5) rotate(-90)" text-anchor="end" font-size="10" fill="#505050">Lesson 03</text>
<text transform="translate(939.02,179.5) rotate(-90)" text-anchor="end" font-size="10" fill="#505050">Lesson 04</text>
<text transform="translate(966.65,179.5) rotate(-90)" text-anchor="end" font-size="10" fill="#505050">Lesson 05</text>
<text transform="translate(994.28,179.5) rotate(-90)" text-anchor="end" font-size="10" fill="#505050">Lesson 06</text>
<text transform="translate(1021.91,179.5) rotate(-90)" text-anchor="end" font-size="10" fill="#505050">Lesson 07</text>
<text transform="translate(1049.55,179.5) rotate(-90)" text-anchor="end" font-size="10" fill="#505050">Lesson 08</text>
<text transform="translate(1077.18,179.5) rotate(-90)" text-anchor="end" font-size="10" fill="#505050">Lesson 09</text>
<text transform="translate(1104.81,179.5) rotate(-90)" text-anchor="end" font-size="10" fill="#505050">Lesson 10</text>
<text transform="translate(1132.44,179.5) rotate(-90)" text-anchor="end" font-size="10" fill="#505050">Lesson 11</text>
<text transform="translate(1160.07,179.5) rotate(-90)" text-anchor="end" font-size="10" fill="#505050">Lesson 12</text>
<text transform="translate(1187.7,179.5) rotate(-90)" text-anchor="end" font-size="10" fill="#505050">Lesson 13</text>
<text transform="translate(1215.34,179.5) rotate(-90)" text-anchor="end" font-size="10" fill="#505050">Lesson 14</text>
<text transform="translate(1242.97,179.5) rotate(-90)" text-anchor="end" font-size="10" fill="#505050">Lesson 15</text>
<text transform="translate(1270.6,179.5) rotate(-90)" text-anchor="end" font-size="10" fill="#505050">Lesson 16</text>
<text transform="translate(1298.23,179.5) rotate(-90)" text-anchor="end" font-size="10" fill="#505050">Lesson 17</text>
<text transform="translate(1325.87,179.5) rotate(-90)" text-anchor="end" font-size="10" fill="#505050">Lesson 18</text>
<text transform="translate(1353.5,179.5) rotate(-90)" text-anchor="end" font-size="10" fill="#505050">Lesson 19</text>
<text transform="translate(1381.13,179.5) rotate(-90)" text-anchor="end" font-size="10" fill="#505050">Lesson 20</text>
<text transform="translate(1408.76,179.5) rotate(-90)" text-anchor="end" font-size="10" fill="#505050">Lesson 21</text>
<text transform="translate(1436.39,179.5) rotate(-90)" text-anchor="end" font-size="10" fill="#505050">Lesson 22</text>
<text transform="translate(1464.03,179.5) rotate(-90)" text-anchor="end" font-size="10" fill="#505050">Lesson 23</text>
<text transform="translate(1491.66,179.5) rotate(-90)" text-anchor="end" font-size="10" fill="#505050">Lesson 24</text>
<text transform="translate(1519.29,179.5) rotate(-90)" text-anchor="end" font-size="10" fill="#505050">Lesson 25</text>
<text transform="translate(1546.92,179.5) rotate(-90)" text-anchor="end" font-size="10" fill="#505050">Lesson 26</text>
<text transform="translate(1574.55,179.5) rotate(-90)" text-anchor="end" font-size="10" fill="#505050">Lesson 27</text>
<text transform="translate(1602.18,179.5) rotate(-90)" text-anchor="end" font-size="10" fill="#505050">Lesson 28</text>
<text transform="translate(1629.82,179.5) rotate(-90)" text-anchor="end" font-size="10" fill="#505050">Lesson 29</text>
<text transform="translate(1657.45,179.5) rotate(-90)" text-anchor="end" font-size="10" fill="#505050">Lesson 30</text>
</svg>
<div class="abs" style="left:768px;top:363px;width:206px;height:25px;background:#fff;box-shadow:1px 1px 3px rgba(0,0,0,.35);font-family:'Liberation Sans',sans-serif;font-size:10px;color:#555;"><svg class="abs" style="left:7px;top:7px" width="12" height="12" viewBox="0 0 12 12"><rect x="0" y="3.2" width="3.2" height="8" fill="#fe1b1b"/><rect x="4.2" y="0" width="3.2" height="11.2" fill="#fe1b1b"/><rect x="8.4" y="7" width="3.2" height="4.2" fill="#fe1b1b"/></svg><span class="abs" style="left:23.5px;top:7px;line-height:12px;white-space:nowrap">Not Met</span><svg class="abs" style="left:75px;top:7px" width="12" height="12" viewBox="0 0 12 12"><rect x="0" y="3.2" width="3.2" height="8" fill="#ffff00"/><rect x="4.2" y="0" width="3.2" height="11.2" fill="#ffff00"/><rect x="8.4" y="7" width="3.2" height="4.2" fill="#ffff00"/></svg><span class="abs" style="left:91px;top:7px;line-height:12px;white-space:nowrap">Approaching</span><svg class="abs" style="left:164px;top:7px" width="12" height="12" viewBox="0 0 12 12"><rect x="0" y="3.2" width="3.2" height="8" fill="#a9d08e"/><rect x="4.2" y="0" width="3.2" height="11.2" fill="#a9d08e"/><rect x="8.4" y="7" width="3.2" height="4.2" fill="#a9d08e"/></svg><span class="abs" style="left:180px;top:7px;line-height:12px;white-space:nowrap">Met</span></div>
<div class="abs" style="left:20px;top:440px;font-size:16px;letter-spacing:.33px;-webkit-text-stroke:.45px #333;line-height:22px;color:#333;white-space:nowrap;">Overall Performance</div>
<div class="abs" style="left:20px;top:471px;width:1668px;height:305px;background:#f2f2f2;overflow:hidden;">
<div class="th" style="left:177.0px;top:8px;width:75.0px;">Standard</div>
<div class="th" style="left:177.0px;top:124px;width:75.0px;">Points</div>
<div class="th" style="left:177.0px;top:160px;width:75.0px;">Answer</div>
<div class="th" style="left:177.0px;top:196px;width:75.0px;">Average</div>
<div class="th" style="left:0.0px;top:196px;width:67.0px;">Student<br>Name</div>
<div class="th" style="left:67.0px;top:196px;width:57.0px;">Total<br>Points</div>
<div class="th" style="left:124.0px;top:196px;width:53.0px;">Score</div>
<div class="th" style="left:252.0px;top:8px;width:81.0px;">4.NBT.A.2,<br>Lesson 01</div>
<div class="th" style="left:252.0px;top:124px;width:81.0px;">1</div>
<div class="th" style="left:252.0px;top:160px;width:81.0px;">D</div>
<div class="th" style="left:252.0px;top:196px;width:81.0px;">Question-<br>1</div>
<div class="th" style="left:333.0px;top:8px;width:81.0px;">4.NBT.A.2,<br>Lesson 01</div>
<div class="th" style="left:333.0px;top:124px;width:81.0px;">1</div>
<div class="th" style="left:333.0px;top:160px;width:81.0px;">B</div>
<div class="th" style="left:333.0px;top:196px;width:81.0px;">Question-<br>2</div>
<div class="th" style="left:414.0px;top:8px;width:82.0px;">4.NBT.A.1,<br>Lesson 02</div>
<div class="th" style="left:414.0px;top:124px;width:82.0px;">1</div>
<div class="th" style="left:414.0px;top:160px;width:82.0px;">C</div>
<div class="th" style="left:414.0px;top:196px;width:82.0px;">Question-<br>3</div>
<div class="th" style="left:496.0px;top:8px;width:81.0px;">4.NBT.A.1,<br>Lesson 02</div>
<div class="th" style="left:496.0px;top:124px;width:81.0px;">1</div>
<div class="th" style="left:496.0px;top:160px;width:81.0px;">-</div>
<div class="th" style="left:496.0px;top:196px;width:81.0px;">Question-<br>4</div>
<div class="th" style="left:577.0px;top:8px;width:82.0px;">4.NBT.A.2,<br>Lesson 03</div>
<div class="th" style="left:577.0px;top:124px;width:82.0px;">1</div>
<div class="th" style="left:577.0px;top:160px;width:82.0px;">C</div>
<div class="th" style="left:577.0px;top:196px;width:82.0px;">Question-<br>5</div>
<div class="th" style="left:659.0px;top:8px;width:81.0px;">4.NBT.A.2,<br>Lesson 03</div>
<div class="th" style="left:659.0px;top:124px;width:81.0px;">1</div>
<div class="th" style="left:659.0px;top:160px;width:81.0px;">A</div>
<div class="th" style="left:659.0px;top:196px;width:81.0px;">Question-<br>6</div>
<div class="th" style="left:740.0px;top:8px;width:82.0px;">4.NBT.A.3,<br>Lesson 04</div>
<div class="th" style="left:740.0px;top:124px;width:82.0px;">1</div>
<div class="th" style="left:740.0px;top:160px;width:82.0px;">C</div>
<div class="th" style="left:740.0px;top:196px;width:82.0px;">Question-<br>7</div>
<div class="th" style="left:822.0px;top:8px;width:81.0px;">4.NBT.A.3,<br>Lesson 04</div>
<div class="th" style="left:822.0px;top:124px;width:81.0px;">1</div>
<div class="th" style="left:822.0px;top:160px;width:81.0px;">B</div>
<div class="th" style="left:822.0px;top:196px;width:81.0px;">Question-<br>8</div>
<div class="th" style="left:903.0px;top:8px;width:82.0px;">4.NBT.B.4,<br>Lesson 05</div>
<div class="th" style="left:903.0px;top:124px;width:82.0px;">1</div>
<div class="th" style="left:903.0px;top:160px;width:82.0px;">B</div>
<div class="th" style="left:903.0px;top:196px;width:82.0px;">Question-<br>9</div>
<div class="th" style="left:985.0px;top:8px;width:81.0px;">4.NBT.B.4,<br>Lesson 05</div>
<div class="th" style="left:985.0px;top:124px;width:81.0px;">1</div>
<div class="th" style="left:985.0px;top:160px;width:81.0px;">D</div>
<div class="th" style="left:985.0px;top:196px;width:81.0px;">Question-<br>10</div>
<div class="th" style="left:1066.0px;top:8px;width:82.0px;">4.NBT.B.4,<br>Lesson 06</div>
<div class="th" style="left:1066.0px;top:124px;width:82.0px;">1</div>
<div class="th" style="left:1066.0px;top:160px;width:82.0px;">C</div>
<div class="th" style="left:1066.0px;top:196px;width:82.0px;">Question-<br>11</div>
<div class="th" style="left:1148.0px;top:8px;width:81.0px;">4.NBT.B.4,<br>Lesson 06</div>
<div class="th" style="left:1148.0px;top:124px;width:81.0px;">1</div>
<div class="th" style="left:1148.0px;top:160px;width:81.0px;">D</div>
<div class="th" style="left:1148.0px;top:196px;width:81.0px;">Question-<br>12</div>
<div class="th" style="left:1229.0px;top:8px;width:82.0px;">4.NBT.B.5,<br>Lesson 07</div>
<div class="th" style="left:1229.0px;top:124px;width:82.0px;">1</div>
<div class="th" style="left:1229.0px;top:160px;width:82.0px;">B</div>
<div class="th" style="left:1229.0px;top:196px;width:82.0px;">Question-<br>13</div>
<div class="th" style="left:1311.0px;top:8px;width:81.0px;">4.NBT.B.5,<br>Lesson 07</div>
<div class="th" style="left:1311.0px;top:124px;width:81.0px;">1</div>
<div class="th" style="left:1311.0px;top:160px;width:81.0px;">A</div>
<div class="th" style="left:1311.0px;top:196px;width:81.0px;">Question-<br>14</div>
<div class="th" style="left:1392.0px;top:8px;width:80.0px;">Lesson<br>08,<br>4.NBT.B.5</div>
<div class="th" style="left:1392.0px;top:124px;width:80.0px;">1</div>
<div class="th" style="left:1392.0px;top:160px;width:80.0px;">D</div>
<div class="th" style="left:1392.0px;top:196px;width:80.0px;">Question-<br>15</div>
<div class="th" style="left:1472.0px;top:8px;width:80.0px;">Lesson<br>08,<br>4.NBT.B.5</div>
<div class="th" style="left:1472.0px;top:124px;width:80.0px;">1</div>
<div class="th" style="left:1472.0px;top:160px;width:80.0px;">A</div>
<div class="th" style="left:1472.0px;top:196px;width:80.0px;">Question-<br>16</div>
<div class="th" style="left:1552.0px;top:8px;width:80.0px;">Lesson<br>09,<br>4.NBT.B.6</div>
<div class="th" style="left:1552.0px;top:124px;width:80.0px;">1</div>
<div class="th" style="left:1552.0px;top:160px;width:80.0px;">C</div>
<div class="th" style="left:1552.0px;top:196px;width:80.0px;">Question-<br>17</div>
<div class="th" style="left:1632.0px;top:8px;width:81.0px;">Lesson<br>09,<br>4.NBT.B.6</div>
<div class="th" style="left:1632.0px;top:124px;width:81.0px;">1</div>
<div class="th" style="left:1632.0px;top:160px;width:81.0px;">A</div>
<div class="th" style="left:1632.0px;top:196px;width:81.0px;">Question-<br>18</div>
<div class="td " style="left:0.0px;width:67.0px;background:#fff;color:#2b7dd3;border-left:1px solid #ddd;border-top:1px solid #ddd;">Gregory<br>Truffle</div>
<div class="td " style="left:67.0px;width:57.0px;background:#fff;color:#555;border-left:1px solid #ddd;border-top:1px solid #ddd;">60</div>
<div class="td " style="left:124.0px;width:53.0px;background:#fff;color:#555;border-left:1px solid #ddd;border-top:1px solid #ddd;">58</div>
<div class="td " style="left:177.0px;width:75.0px;background:#a9d08e;color:#222;font-weight:700;font-size:12.6px;padding-top:9px;">96.67%</div>
<div class="td g" style="left:252.0px;width:81.0px;border-left:0;">D</div>
<div class="td g" style="left:333.0px;width:81.0px;">B</div>
<div class="td g" style="left:414.0px;width:82.0px;">C</div>
<div class="td g" style="left:496.0px;width:81.0px;">1.0</div>
<div class="td g" style="left:577.0px;width:82.0px;">C</div>
<div class="td g" style="left:659.0px;width:81.0px;">A</div>
<div class="td g" style="left:740.0px;width:82.0px;">C</div>
<div class="td g" style="left:822.0px;width:81.0px;">B</div>
<div class="td g" style="left:903.0px;width:82.0px;">B</div>
<div class="td g" style="left:985.0px;width:81.0px;">D</div>
<div class="td g" style="left:1066.0px;width:82.0px;">C</div>
<div class="td g" style="left:1148.0px;width:81.0px;">D</div>
<div class="td g" style="left:1229.0px;width:82.0px;">B</div>
<div class="td g" style="left:1311.0px;width:81.0px;">A</div>
<div class="td g" style="left:1392.0px;width:80.0px;">D</div>
<div class="td g" style="left:1472.0px;width:80.0px;">A</div>
<div class="td g" style="left:1552.0px;width:80.0px;">C</div>
<div class="td g" style="left:1632.0px;width:81.0px;">A</div>
</div>
</div>
<div id="footer" class="abs">
  <a style="left:19px;color:#0000ee;">Privacy Policy</a>
  <a style="left:121px;color:#551a8b;">Get Help</a>
</div>
<div id="rstrip" class="abs"></div>
<div class="redbox" style="z-index:7;left:1740px;top:159px;width:140px;height:55px;"></div>
</body>
</html>
